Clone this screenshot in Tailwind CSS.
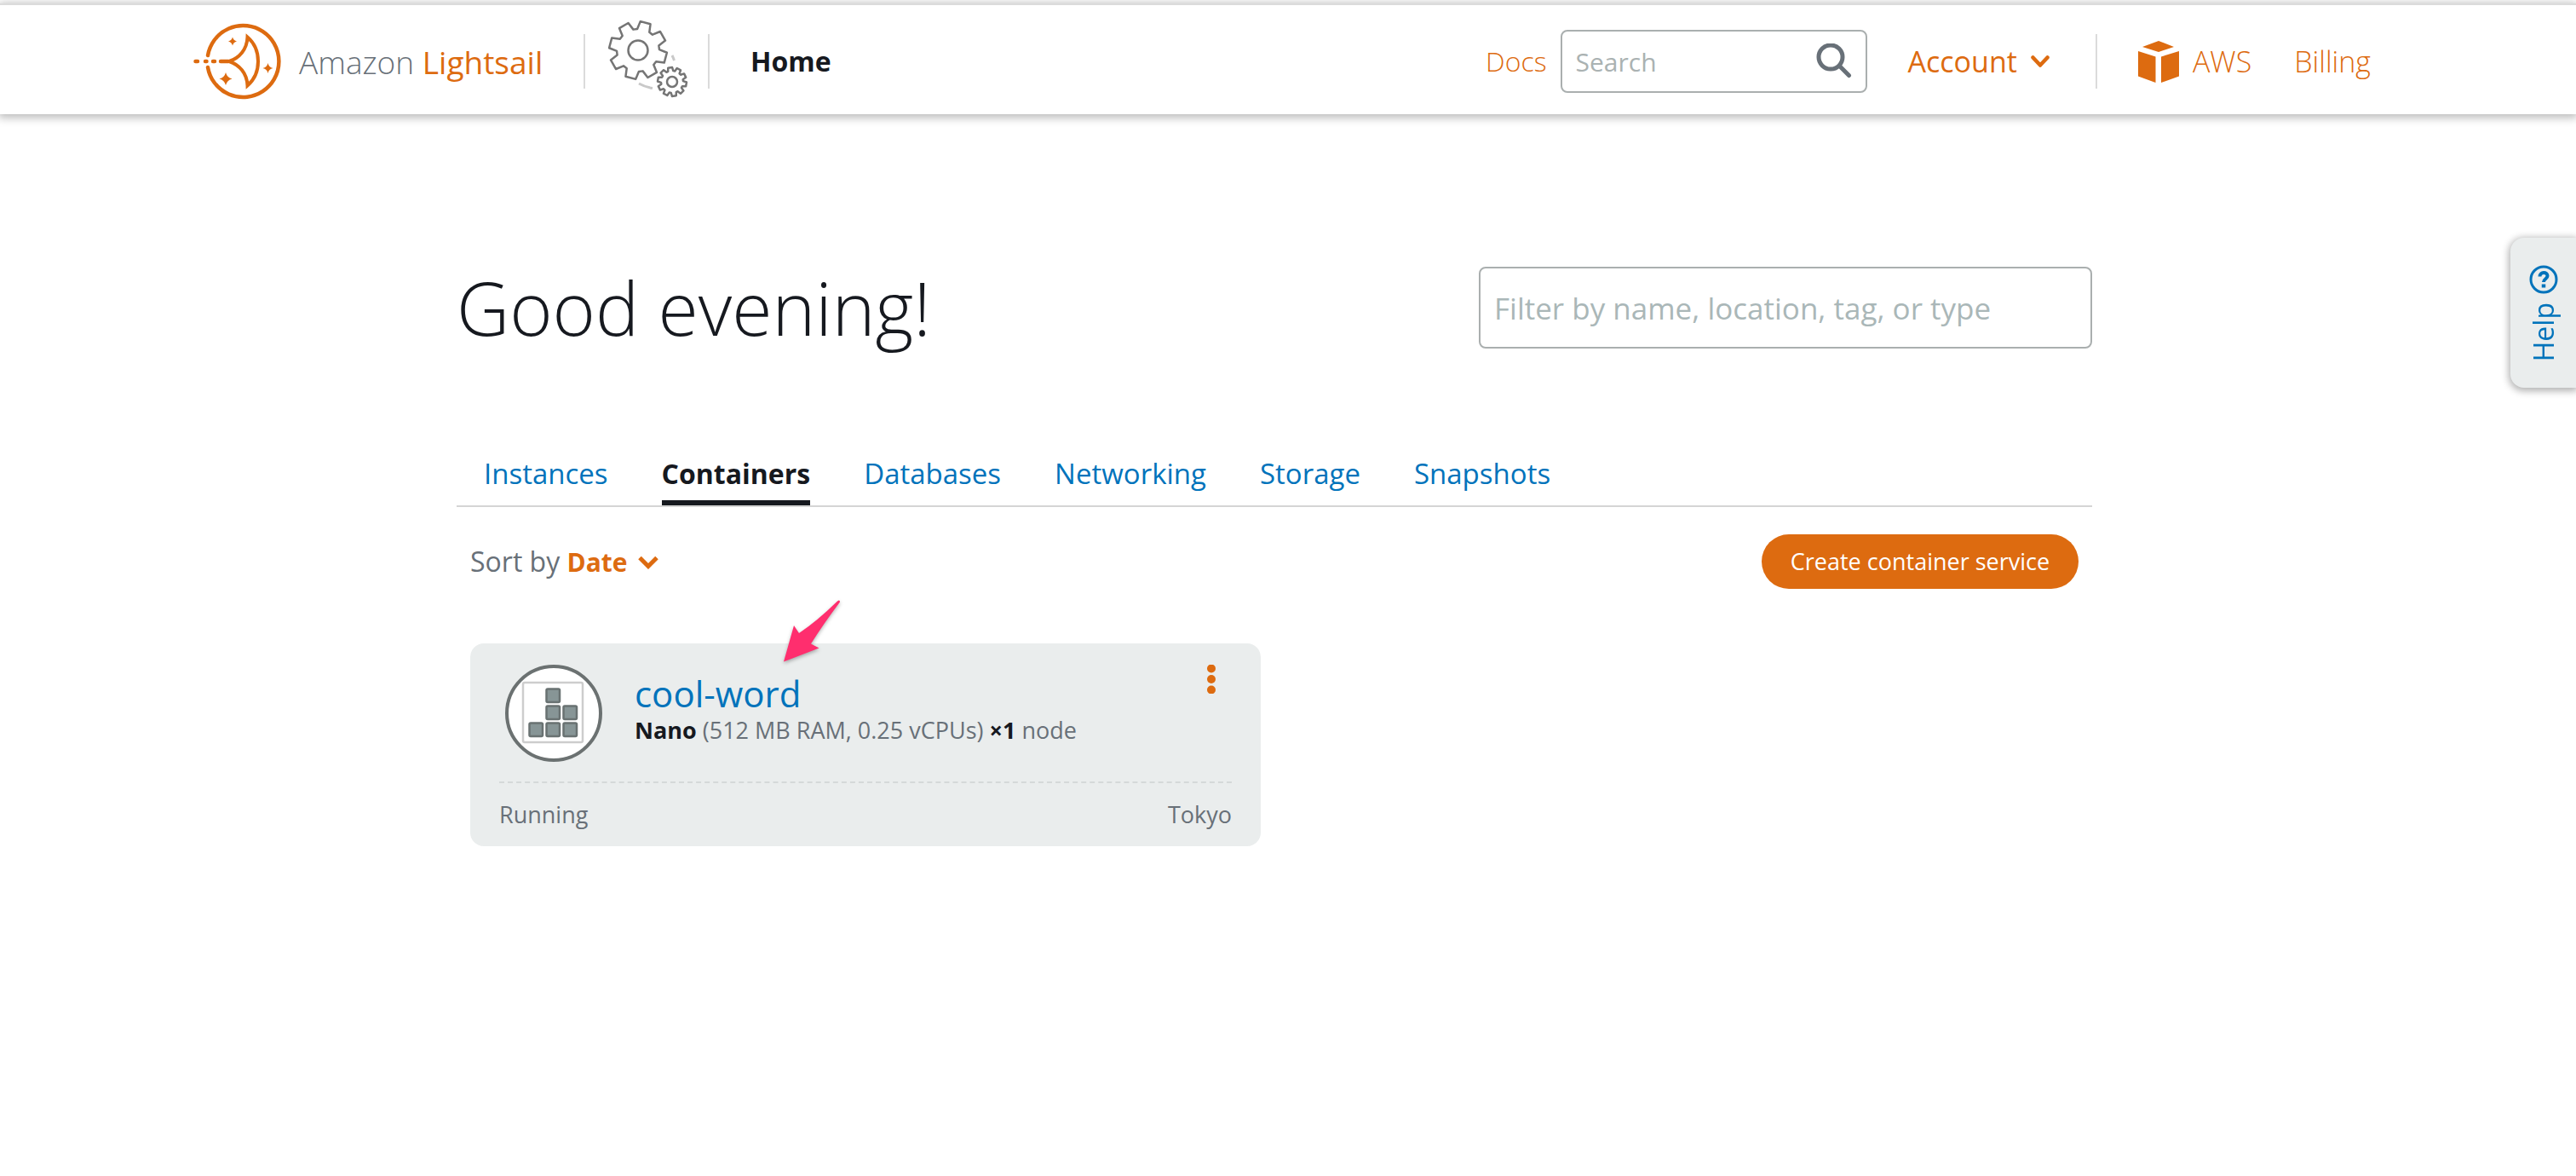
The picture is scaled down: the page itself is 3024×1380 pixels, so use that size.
<!DOCTYPE html>
<html lang="en">
<head>
<meta charset="utf-8">
<title>Amazon Lightsail</title>
<script src="https://cdn.jsdelivr.net/npm/@tailwindcss/browser@4"></script>
</head>
<body class="relative min-h-screen bg-white font-['Open_Sans','Noto_Sans',sans-serif] text-[#16191f]">

<header class="mt-1 h-[130px] border-t-2 border-[#dbdbdb] bg-white pt-1 shadow-[0_2px_10px_2px_rgba(0,0,0,0.28)]">
  <div class="mx-auto flex h-full max-w-[2570px] items-center pr-[14px]">
    <a href="#" class="flex w-[458px] items-center gap-5 text-[37px] leading-none">
      <svg class="h-[92px] w-[104px] shrink-0" viewBox="0 0 104 92" fill="none" stroke="#dd6b10" stroke-width="4.5" stroke-linecap="round" aria-hidden="true">
        <path d="M17 39A42 42 0 1 1 17 53"/>
        <path d="M2.500 46H5M14 46h1.500M23 46h2M32 46h9"/>
        <path d="M42 46C54 42 63 32 63.500 17.500C71 24 76 34 76 46S71 68 63.500 74.500C63 60 54 50 42 46Z" stroke-width="4" stroke-linejoin="miter"/>
        <g fill="#dd6b10" stroke="none">
          <path d="M46 17.500q1 4 5 5q-4 1-5 5q-1-4-5-5q4-1 5-5Z"/>
          <path d="M87.500 48q1 5 6 6q-5 1-6 6q-1-5-6-6q5-1 6-6Z"/>
          <path d="M38 59q1.500 6 7.500 7.500q-6 1.500-7.500 7.500q-1.500-6-7.500-7.500q6-1.500 7.500-7.500Z"/>
        </g>
      </svg>
      <span class="whitespace-nowrap"><span class="font-light text-[#687078]">Amazon</span> <span class="font-medium text-[#dd6b10]">Lightsail</span></span>
    </a>
    <div class="flex h-16 w-[148px] items-center justify-center border-x-2 border-[#dbdbdb] pl-1.5">
      <svg class="h-24 w-24 shrink-0" viewBox="0 0 96 96" fill="none" stroke="#757575" stroke-width="2.500" stroke-linejoin="round" aria-hidden="true">
        <path d="M36 74q7 4 16 5.500M75 41q1.500 3 2.500 6" stroke="#c9c9c9" stroke-width="3"/>
        <path data-gear="35 35 34 25 8 15"/>
        <circle cx="35" cy="35" r="11.500"/>
        <circle cx="75" cy="72" r="16" fill="#fff" stroke="none"/>
        <path data-gear="75 72 17 13 10 -8" fill="#fff"/>
        <circle cx="75" cy="72" r="6"/>
      </svg>
    </div>
    <a href="#" class="ml-12 text-[32px] font-bold">Home</a>

    <nav class="ml-auto flex items-center whitespace-nowrap text-[34px] font-light text-[#dd6b10]">
      <a href="#" class="text-[32px]">Docs</a>
      <form class="ml-4 flex h-[74px] w-[360px] items-center rounded-lg border-2 border-[#aaafaf] px-4">
        <input type="search" aria-label="Search" placeholder="Search" class="min-w-0 flex-1 bg-transparent text-[30px] font-normal text-[#16191f] outline-none placeholder:text-[#aab2b2]">
        <button type="button" aria-label="Submit search">
          <svg class="block h-[42px] w-[42px]" viewBox="0 0 42 42" fill="none" stroke="#687078" stroke-width="5" stroke-linecap="round"><circle cx="17" cy="16" r="14"/><path d="M27.500 26.500L38.500 37.500"/></svg>
        </button>
      </form>
      <button type="button" class="ml-12 flex items-center gap-4 font-medium">Account
        <svg class="h-4 w-[22px]" viewBox="0 0 22 16" fill="none" stroke="#dd6b10" stroke-width="4.500" stroke-linecap="round" stroke-linejoin="round" aria-hidden="true"><path d="M2.500 3.500L11 12.500L19.500 3.500"/></svg>
      </button>
      <div class="ml-[54px] h-16 w-[2px] bg-[#dbdbdb]"></div>
      <a href="#" class="ml-12 flex items-center gap-4">
        <svg class="h-[49px] w-12" viewBox="0 0 48 49" fill="#dd6b10" aria-hidden="true"><path d="M24 0L42 7L24 13L5 7ZM0 12L20.500 18.500V49L0 41.500ZM27 18.500L48 12V41.500L27 49Z"/></svg>
        AWS</a>
      <a href="#" class="ml-[50px]">Billing</a>
    </nav>
  </div>
</header>

<main class="pr-8 pt-[179px]">
  <div class="mx-auto max-w-[1920px]">
    <div class="flex h-24 items-center justify-between">
      <h1 class="text-[86px] leading-none font-light">Good evening!</h1>
      <input type="text" aria-label="Filter resources" placeholder="Filter by name, location, tag, or type" class="h-24 w-[720px] rounded-lg border-2 border-[#aaafaf] px-4 text-[35px] outline-none placeholder:text-[#aab7b8]">
    </div>

    <nav class="mt-[127px] flex gap-[63px] border-b-2 border-[#d5d5d5] pl-8 text-[33px] leading-10 text-[#0073bb]">
      <a href="#" class="pb-[17px]">Instances</a>
      <a href="#" aria-current="page" class="border-b-6 border-[#16191f] pb-[11px] text-[32px] font-bold text-[#16191f]">Containers</a>
      <a href="#" class="pb-[17px]">Databases</a>
      <a href="#" class="pb-[17px]">Networking</a>
      <a href="#" class="pb-[17px]">Storage</a>
      <a href="#" class="pb-[17px]">Snapshots</a>
    </nav>

    <section class="px-4 pt-8">
      <div class="flex items-center justify-between">
        <div class="flex items-baseline text-[32px] text-[#687078]">
          <span>Sort by&nbsp;</span>
          <button type="button" class="flex items-center gap-3 text-[30px] font-bold text-[#dd6b10]">Date
            <svg class="h-4 w-6" viewBox="0 0 24 16" fill="none" stroke="#dd6b10" stroke-width="5" aria-hidden="true"><path d="M2 2.500L12 12.500L22 2.500"/></svg>
          </button>
        </div>
        <button type="button" class="h-16 w-[372px] rounded-full bg-[#dd6b10] text-[27px] font-medium text-white">Create container service</button>
      </div>

      <article class="relative mt-16 w-[928px] rounded-2xl bg-[#eaeded] px-[34px] text-[27px] text-[#687078]">
        <div class="flex h-[162px] items-start pl-[7px] pt-[25px]">
          <svg class="h-[114px] w-[114px] shrink-0" viewBox="0 0 114 114" aria-hidden="true">
            <circle cx="57" cy="57" r="55" fill="#fff" stroke="#6b7171" stroke-width="4"/>
            <rect x="21" y="21" width="70" height="70" rx="2" fill="#fff" stroke="#cdcdcd" stroke-width="2.500"/>
            <g fill="#879596" stroke="#697272" stroke-width="2.500">
              <rect x="48.500" y="28.500" width="15.500" height="15.500" rx="1.500"/>
              <rect x="48.500" y="48.500" width="15.500" height="15.500" rx="1.500"/>
              <rect x="68.500" y="48.500" width="15.500" height="15.500" rx="1.500"/>
              <rect x="28.500" y="68.500" width="15.500" height="15.500" rx="1.500"/>
              <rect x="48.500" y="68.500" width="15.500" height="15.500" rx="1.500"/>
              <rect x="68.500" y="68.500" width="15.500" height="15.500" rx="1.500"/>
            </g>
          </svg>
          <div class="flex-1 pl-[38px] pt-2">
            <h2 class="text-[42px] leading-[52px] font-medium"><a href="#" class="text-[#0073bb]">cool-word</a></h2>
            <p class="leading-[34px]"><b class="text-[#16191f]">Nano</b> (512 MB RAM, 0.25 vCPUs) <b class="text-[#16191f]">×1</b> node</p>
          </div>
          <button type="button" aria-label="Actions" class="mr-[18px]">
            <svg class="block h-[34px] w-3" viewBox="0 0 12 34" fill="#dd6b10"><circle cx="6" cy="4.500" r="5"/><circle cx="6" cy="17" r="5"/><circle cx="6" cy="29.500" r="5"/></svg>
          </button>
        </div>
        <div class="flex h-[76px] items-center justify-between border-t-2 border-dashed border-[#d5d9d9] font-medium">
          <span>Running</span><span>Tokyo</span>
        </div>
        <svg class="absolute -top-[52px] left-[366px] h-[76px] w-[72px] drop-shadow-[0_2px_2px_rgba(0,0,0,0.3)]" viewBox="0 0 72 76" fill="#ff2e6e" aria-hidden="true"><path d="M2 73.500L14 31L20 40Q41 26 65 2.500Q68 0 68 3.500Q48 30 34 52.500L43.500 57.500Z"/></svg>
      </article>
    </section>
  </div>
</main>

<button type="button" class="absolute right-0 top-[279px] flex h-44 w-[77px] flex-col items-center gap-2.5 rounded-l-2xl bg-[#eaeded] pt-8 text-[#0073bb] shadow-[0_2px_8px_2px_rgba(0,0,0,0.3)]">
  <svg class="h-[34px] w-[34px] shrink-0" viewBox="0 0 34 34" fill="none" stroke="#0073bb" aria-hidden="true"><circle cx="17" cy="17" r="15" stroke-width="3"/><path d="M12.500 13.500C12.500 7.500 21.500 7.500 21.500 12.800C21.500 16.500 17 16 17 20" stroke-width="4"/><path d="M17 22.500v4" stroke-width="4.500"/></svg>
  <span class="rotate-180 text-[32px] leading-10 [writing-mode:vertical-rl]">Help</span>
</button>

<script>
// data-gear: centre x, centre y, outer radius, root radius, number of teeth, angle of the first tooth
document.querySelectorAll('[data-gear]').forEach(el => {
  const [cx, cy, outer, root, teeth, start] = el.dataset.gear.split(' ').map(Number);
  const step = 360 / teeth, pts = [];
  for (let i = 0; i < teeth; i++) {
    const a = start + i * step;
    for (const [r, f] of [[root, -0.38], [outer, -0.23], [outer, 0.23], [root, 0.38]]) {
      const t = (a + f * step - 90) * Math.PI / 180;
      pts.push((cx + r * Math.cos(t)).toFixed(2) + ' ' + (cy + r * Math.sin(t)).toFixed(2));
    }
  }
  el.setAttribute('d', 'M' + pts.join('L') + 'Z');
});
</script>
</body>
</html>
